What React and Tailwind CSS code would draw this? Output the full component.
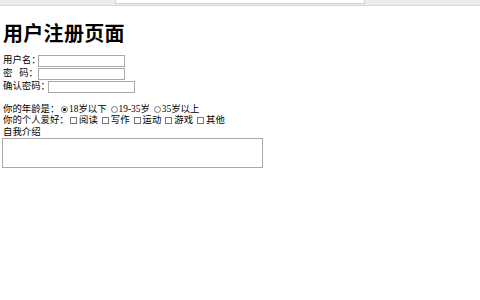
import { useState } from "react";

const font = { fontFamily: '"Liberation Serif", "Noto Sans CJK SC", serif' };

function Radio({ checked, onClick }) {
  return (
    <span
      onClick={onClick}
      className="inline-flex flex-none items-center justify-center w-[7px] h-[7px] rounded-full border border-[#767676] bg-white mr-[1px]"
    >
      {checked && <span className="w-[3px] h-[3px] rounded-full bg-black" />}
    </span>
  );
}

function Check({ checked, onClick }) {
  return (
    <span
      onClick={onClick}
      className="inline-flex flex-none items-center justify-center w-[7px] h-[7px] border border-[#767676] bg-white mr-[2px]"
    >
      {checked && <span className="w-[3px] h-[3px] bg-black" />}
    </span>
  );
}

export default function App() {
  const [age, setAge] = useState("18岁以下");
  const [hobbies, setHobbies] = useState([]);

  const ages = ["18岁以下", "19-35岁", "35岁以上"];
  const hobbyList = ["阅读", "写作", "运动", "游戏", "其他"];

  const toggleHobby = (h) =>
    setHobbies(hs => (hs.includes(h) ? hs.filter(x => x !== h) : [...hs, h]));

  return (
    <div className="w-[480px] h-[300px] bg-white overflow-hidden text-black" style={font}>
      {/* browser strip */}
      <div className="h-[6px] bg-[#ececec] border-b border-[#d6d6d6] pl-[115px]">
        <div className="w-[250px] h-[4px] bg-white border-b border-r border-l border-[#d0d0d0]" />
      </div>

      <div className="pl-[3px] whitespace-nowrap">
        <h1 className="text-[20px] leading-[20px] font-bold mt-[17px] mb-[11px] tracking-[0.3px]" style={{ fontFamily: '"Noto Sans CJK SC", sans-serif' }}>
          用户注册页面
        </h1>

        <div className="text-[9.4px] leading-[11px]">
          <div className="flex items-center h-[13px]">
            <span className="w-[35px] flex-none">用户名：</span>
            <input className="w-[87px] h-[12px] border border-[#a9a9a9] outline-none px-[1px] text-[9px]" />
          </div>
          <div className="flex items-center h-[13px]">
            <span className="w-[35px] flex-none flex"><span className="w-[19px]">密</span>码：</span>
            <input type="password" className="w-[87px] h-[12px] border border-[#a9a9a9] outline-none px-[1px] text-[9px]" />
          </div>
          <div className="flex items-center h-[13px]">
            <span className="w-[45px] flex-none">确认密码：</span>
            <input type="password" className="w-[87px] h-[12px] border border-[#a9a9a9] outline-none px-[1px] text-[9px]" />
          </div>

          <div className="h-[11px]" />

          <div className="flex items-center h-[11px]">
            <span className="w-[58px] flex-none">你的年龄是：</span>
            {ages.map(a => (
              <label key={a} className="flex items-center mr-[4px]" onClick={() => setAge(a)}>
                <Radio checked={age === a} />
                <span>{a}</span>
              </label>
            ))}
          </div>
          <div className="flex items-center h-[11px]">
            <span className="w-[67px] flex-none">你的个人爱好：</span>
            {hobbyList.map(h => (
              <label key={h} className="flex items-center mr-[4px]" onClick={() => toggleHobby(h)}>
                <Check checked={hobbies.includes(h)} />
                <span>{h}</span>
              </label>
            ))}
          </div>
          <div className="h-[12px] flex items-center">自我介绍</div>
          <textarea className="block w-[261px] h-[30px] border border-[#a9a9a9] outline-none resize-none -ml-[1px]" />
        </div>
      </div>
    </div>
  );
}
